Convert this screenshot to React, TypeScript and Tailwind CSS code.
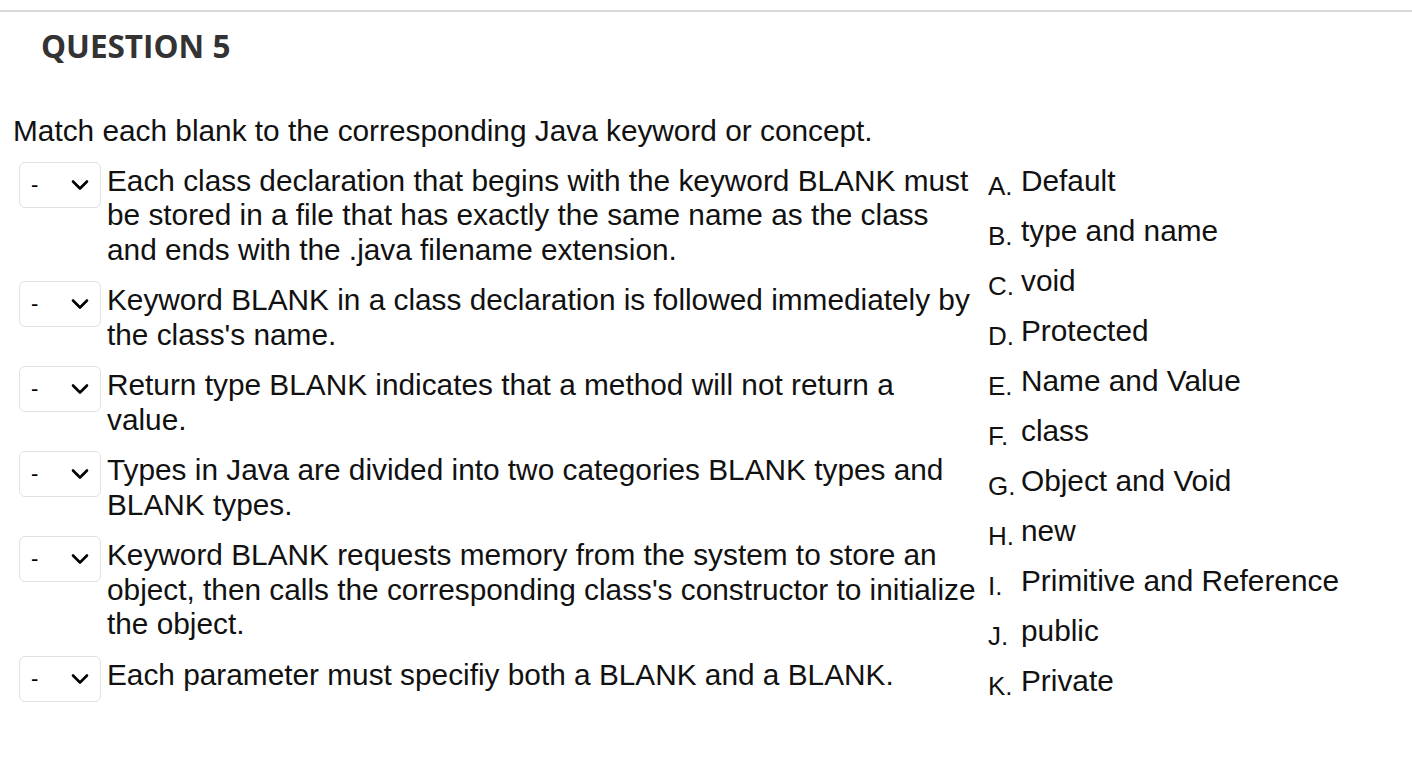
type Prompt = { text: string };

const PROMPTS: Prompt[] = [
  {
    text: "Each class declaration that begins with the keyword BLANK must be stored in a file that has exactly the same name as the class and ends with the .java filename extension.",
  },
  { text: "Keyword BLANK in a class declaration is followed immediately by the class's name." },
  { text: "Return type BLANK indicates that a method will not return a value." },
  { text: "Types in Java are divided into two categories BLANK types and BLANK types." },
  {
    text: "Keyword BLANK requests memory from the system to store an object, then calls the corresponding class's constructor to initialize the object.",
  },
  { text: "Each parameter must specifiy both a BLANK and a BLANK." },
];

const ANSWERS = [
  ["A.", "Default"],
  ["B.", "type and name"],
  ["C.", "void"],
  ["D.", "Protected"],
  ["E.", "Name and Value"],
  ["F.", "class"],
  ["G.", "Object and Void"],
  ["H.", "new"],
  ["I.", "Primitive and Reference"],
  ["J.", "public"],
  ["K.", "Private"],
];

function BlankSelect() {
  return (
    <div className="mr-[6px] mt-[-2px] flex h-[46px] w-[82px] shrink-0 items-center justify-between rounded-[6px] border border-[#e2e2e2] bg-white pl-[11px] pr-[11px]">
      <span className="text-[22px] leading-none text-black">-</span>
      <svg width="18" height="12" viewBox="0 0 18 12" fill="none" aria-hidden="true">
        <path d="M2 2.5 L9 9.5 L16 2.5" stroke="#000" strokeWidth="2.6" strokeLinecap="round" strokeLinejoin="round" />
      </svg>
    </div>
  );
}

export default function App() {
  return (
    <div
      className="min-h-[784px] w-[1412px] bg-white text-[#111]"
      style={{ fontFamily: '"Liberation Sans", Arial, sans-serif' }}
    >
      <div className="pt-[10px]">
        <div className="h-[2px] w-full bg-[#d9d9d9]" />
      </div>

      <h2
        className="ml-[41px] mt-[14px] text-[31.5px] font-bold leading-[40px] text-[#333]"
        style={{ fontFamily: '"Open Sans", sans-serif' }}
      >
        QUESTION 5
      </h2>

      <p className="ml-[13px] mt-[48px] text-[29.8px] leading-[34.5px]">
        Match each blank to the corresponding Java keyword or concept.
      </p>

      <div className="mt-[15px] flex">
        <div className="ml-[19px] flex w-[959px] flex-col gap-4">
          {PROMPTS.map((p, i) => (
            <div key={i} className="flex items-start">
              <BlankSelect />
              <div className="w-[871px] text-[29.8px] leading-[34.5px]">{p.text}</div>
            </div>
          ))}
        </div>

        <div className="ml-[10px] flex flex-col">
          {ANSWERS.map(([letter, label]) => (
            <div key={letter} className="flex h-[50.1px] items-start">
              <span className="mt-[5px] w-[33px] shrink-0 text-[26px] leading-[34.5px]">{letter}</span>
              <span className="whitespace-nowrap text-[29.8px] leading-[34.5px]">{label}</span>
            </div>
          ))}
        </div>
      </div>
    </div>
  );
}
